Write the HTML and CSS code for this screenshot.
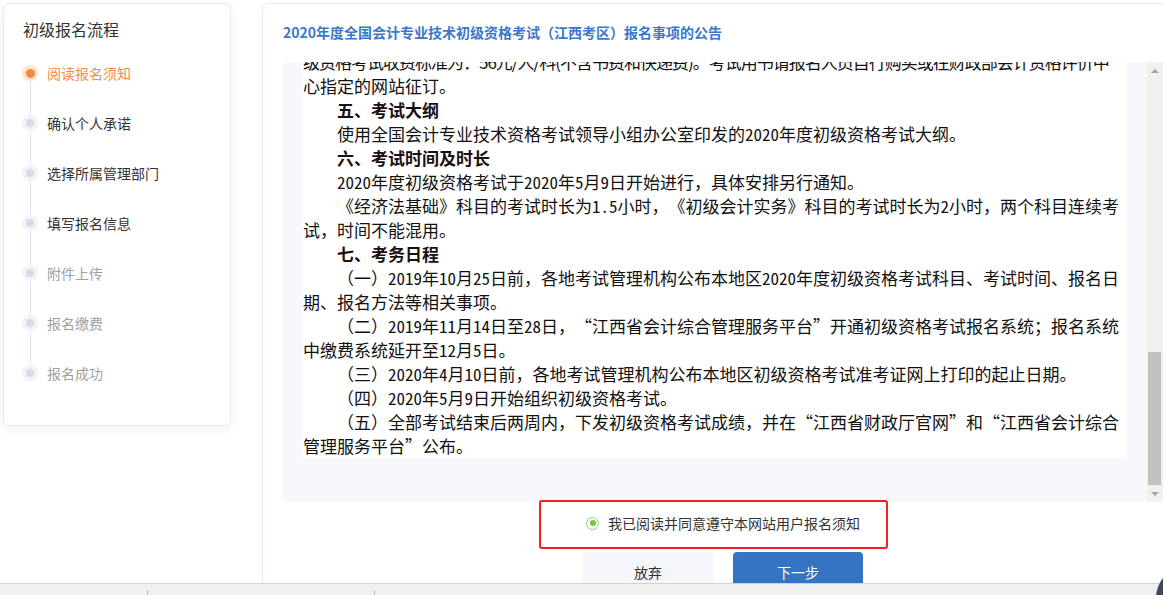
FILE: index.html
```html
<!DOCTYPE html>
<html lang="zh-CN">
<head>
<meta charset="utf-8">
<title>初级报名流程 - 阅读报名须知</title>
<link rel="stylesheet" href="styles.css">
</head>
<body>
<div class="app">
  <aside class="steps-card">
    <h2 class="steps-title">初级报名流程</h2>
    <ul class="steps">
      <li class="step is-active"><span class="dot"></span><span class="label">阅读报名须知</span></li>
      <li class="step is-open"><span class="dot"></span><span class="label">确认个人承诺</span></li>
      <li class="step is-open"><span class="dot"></span><span class="label">选择所属管理部门</span></li>
      <li class="step is-open"><span class="dot"></span><span class="label">填写报名信息</span></li>
      <li class="step is-locked"><span class="dot"></span><span class="label">附件上传</span></li>
      <li class="step is-locked"><span class="dot"></span><span class="label">报名缴费</span></li>
      <li class="step is-locked"><span class="dot"></span><span class="label">报名成功</span></li>
    </ul>
  </aside>

  <main class="notice-card">
    <h1 class="notice-title">2020年度全国会计专业技术初级资格考试（江西考区）报名事项的公告</h1>
    <div class="scroll-box">
      <div class="scroll-content">
        <div class="doc">
          <p class="para cont"><span class="tight">级资格考试收费标准为：56元/人/科(不含书费和快递费)。考试用书请报名人员自行购买或在财政部会计资格评价中</span><br>心指定的网站征订。</p>
          <p class="para heading">五、考试大纲</p>
          <p class="para">使用全国会计专业技术资格考试领导小组办公室印发的<span class="num">2020</span>年度初级资格考试大纲。</p>
          <p class="para heading">六、考试时间及时长</p>
          <p class="para"><span class="num">2020</span>年度初级资格考试于<span class="num">2020</span>年<span class="num">5</span>月<span class="num">9</span>日开始进行，具体安排另行通知。</p>
          <p class="para">《经济法基础》科目的考试时长为<span class="num">1.5</span>小时，《初级会计实务》科目的考试时长为<span class="num">2</span>小时，两个科目连续考<br>试，时间不能混用。</p>
          <p class="para heading">七、考务日程</p>
          <p class="para">（一）<span class="num">2019</span>年<span class="num">10</span>月<span class="num">25</span>日前，各地考试管理机构公布本地区<span class="num">2020</span>年度初级资格考试科目、考试时间、报名日<br>期、报名方法等相关事项。</p>
          <p class="para">（二）<span class="num">2019</span>年<span class="num">11</span>月<span class="num">14</span>日至<span class="num">28</span>日，“江西省会计综合管理服务平台”开通初级资格考试报名系统；报名系统<br>中缴费系统延开至<span class="num">12</span>月<span class="num">5</span>日。</p>
          <p class="para">（三）<span class="num">2020</span>年<span class="num">4</span>月<span class="num">10</span>日前，各地考试管理机构公布本地区初级资格考试准考证网上打印的起止日期。</p>
          <p class="para">（四）<span class="num">2020</span>年<span class="num">5</span>月<span class="num">9</span>日开始组织初级资格考试。</p>
          <p class="para">（五）全部考试结束后两周内，下发初级资格考试成绩，并在“江西省财政厅官网”和“江西省会计综合<br>管理服务平台”公布。</p>
        </div>
      </div>
      <div class="scrollbar">
        <span class="sb-btn sb-up"></span>
        <div class="sb-track"><span class="sb-thumb"></span></div>
        <span class="sb-btn sb-down"></span>
      </div>
    </div>

    <div class="agree-row">
      <label class="agree"><span class="radio"></span><span class="agree-text">我已阅读并同意遵守本网站用户报名须知</span></label>
      <span class="annot"></span>
    </div>

    <div class="actions">
      <button class="btn btn-plain" type="button">放弃</button>
      <button class="btn btn-primary" type="button">下一步</button>
    </div>
  </main>
</div>

<footer class="statusbar">
  <span class="status-cell cell-a"></span>
  <span class="status-cell cell-b"></span>
</footer>
<span class="float-ball"></span>
</body>
</html>
```
FILE: styles.css
```css
* { box-sizing: border-box; }

html, body {
  margin: 0;
  padding: 0;
}

body {
  width: 1163px;
  height: 595px;
  overflow: hidden;
  display: flex;
  flex-direction: column;
  background: #ffffff;
  font-family: "Noto Sans CJK SC", "Noto Sans", sans-serif;
  color: #333;
  text-spacing-trim: space-all;
}

.app {
  height: 583px;
  flex: none;
  overflow: hidden;
  display: flex;
  align-items: flex-start;
  gap: 31px;
  padding: 3px 0 0 3px;
  width: 1200px;
}

/* ---------- left steps card ---------- */
.steps-card {
  flex: none;
  width: 228px;
  background: #fff;
  border: 1px solid #e6eaf6;
  border-radius: 6px;
  box-shadow: 0 3px 12px rgba(60, 80, 140, 0.08);
  padding: 14px 18px 27px 18px;
}

.steps-title {
  margin: 0 0 8px 1px;
  font-size: 16px;
  line-height: 22px;
  font-weight: normal;
  color: #333;
}

.steps {
  list-style: none;
  margin: 0;
  padding: 0;
}

.step {
  position: relative;
  height: 50px;
  display: flex;
  align-items: center;
  gap: 9px;
  font-size: 14px;
}

.step:not(:last-child)::after {
  content: "";
  position: absolute;
  left: 8px;
  top: 33px;
  height: 34px;
  width: 1px;
  background: #e2e6f1;
}

.dot {
  flex: none;
  width: 16px;
  height: 16px;
  border-radius: 50%;
  background: #f1f3f8;
  display: flex;
  align-items: center;
  justify-content: center;
}

.dot::before {
  content: "";
  width: 8px;
  height: 8px;
  border-radius: 50%;
  background: #d6dbe5;
}

.is-active .dot { background: #fde4d3; }
.is-active .dot::before { background: #f7893f; width: 9px; height: 9px; }
.is-active .label { color: #f78b4b; }
.is-open .label { color: #333; }
.is-locked .label { color: #a0a0a0; }

/* ---------- main notice card ---------- */
.notice-card {
  flex: none;
  width: 922px;
  background: #fff;
  border: 1px solid #e6eaf6;
  border-radius: 6px;
  padding: 18px 20px 20px 20px;
}

.notice-title {
  margin: 0 0 20px 0;
  font-size: 14px;
  line-height: 20px;
  font-weight: bold;
  color: #3a78c9;
}

.scroll-box {
  height: 440px;
  display: flex;
  background: #f7f8fc;
  border-radius: 4px;
  overflow: hidden;
}

.scroll-content {
  flex: 1;
  min-width: 0;
  padding: 0 20px;
  overflow: hidden;
}

.doc {
  margin-top: -12px;
  background: #fff;
  font-family: "Noto Sans CJK SC", sans-serif;
  font-size: 17px;
  line-height: 24px;
  color: #111;
}

.para {
  margin: 0;
  text-indent: 2em;
  white-space: nowrap;
}

.para.cont { text-indent: 0; }

.num { font-feature-settings: "hwid"; }

.tight { letter-spacing: -1px; }

.para.heading {
  font-weight: bold;
  color: #1a1010;
}

/* fake classic scrollbar */
.scrollbar {
  flex: none;
  width: 16px;
  background: #f0f0f0;
  display: flex;
  flex-direction: column;
}

.sb-btn {
  flex: none;
  height: 17px;
  display: flex;
  align-items: center;
  justify-content: center;
}

.sb-btn::before {
  content: "";
  width: 0;
  height: 0;
  border-left: 4px solid transparent;
  border-right: 4px solid transparent;
}

.sb-up::before { border-bottom: 4px solid #a3a3a3; }
.sb-down::before { border-top: 4px solid #a3a3a3; }

.sb-track {
  flex: 1;
  display: flex;
  flex-direction: column;
}

.sb-thumb {
  margin: 273px 2px 0 1px;
  height: 133px;
  background: #c1c1c1;
}

/* agreement row */
.agree-row {
  position: relative;
  height: 42px;
  display: flex;
  align-items: center;
  justify-content: center;
}

.agree {
  display: flex;
  align-items: center;
  gap: 9px;
  font-size: 14px;
  color: #333;
}

.radio {
  width: 13px;
  height: 13px;
  border-radius: 50%;
  border: 1px solid #92d16f;
  display: flex;
  align-items: center;
  justify-content: center;
  background: #fff;
}

.radio::before {
  content: "";
  width: 6px;
  height: 6px;
  border-radius: 50%;
  background: #77c646;
}

.annot {
  position: absolute;
  left: 256px;
  top: -2px;
  width: 349px;
  height: 49px;
  border: 2px solid #fb1d1d;
  border-radius: 3px;
  pointer-events: none;
}

.actions {
  margin-top: 8px;
  display: flex;
  justify-content: center;
  gap: 20px;
}

.btn {
  width: 130px;
  height: 40px;
  border: none;
  border-radius: 4px;
  font-family: inherit;
  font-size: 14px;
  cursor: pointer;
}

.btn-plain {
  background: #f4f6fb;
  color: #333;
}

.btn-primary {
  background: #3474c3;
  color: #fff;
}

/* browser status bar */
.statusbar {
  flex: none;
  height: 12px;
  border-top: 1px solid #d2d2d2;
  background: #f0f0f0;
  display: flex;
  align-items: flex-end;
}

.status-cell {
  height: 5px;
  border-right: 1px solid #bdbdbd;
}

.cell-a { width: 148px; }
.cell-b { width: 227px; }

.float-ball {
  position: fixed;
  left: 1156px;
  top: 566px;
  width: 64px;
  height: 64px;
  border-radius: 50%;
  background: #3f4959;
}
```
